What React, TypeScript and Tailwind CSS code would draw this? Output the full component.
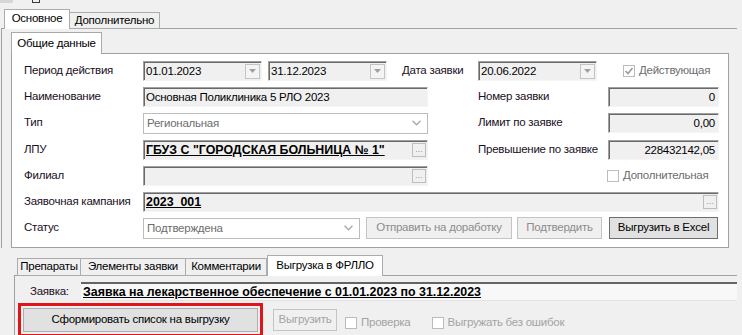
import React from "react";

type FieldProps = {
  w: string;
  children?: React.ReactNode;
  right?: boolean;
  bold?: boolean;
  dots?: boolean;
  dd?: boolean;
};

function Field({ w, children, right, bold, dots, dd }: FieldProps) {
  return (
    <div
      className={`${w} h-[20px] shrink-0 flex items-center bg-[#f0f0f0] border border-t-[#a0a0a0] border-l-[#a0a0a0] border-r-[#f4f4f4] border-b-[#f4f4f4] shadow-[inset_1px_1px_0_#696969] pl-[2px] pr-[2px] ${
        right ? "justify-end" : ""
      }`}
    >
      <span
        className={`flex-1 truncate leading-[16px] ${right ? "text-right pr-[1px]" : ""} ${
          bold ? "font-bold underline text-black text-[12.4px] tracking-normal" : "text-black"
        }`}
      >
        {children}
      </span>
      {dots && (
        <div className="w-[14px] h-[14px] shrink-0 border border-[#bdbdbd] bg-[#f0f0f0] flex items-end justify-center text-[9px] leading-[9px] text-[#9a9a9a] pb-[2px] mr-[-1px] tracking-normal">
          ...
        </div>
      )}
      {dd && (
        <div className="w-[15px] h-[15px] shrink-0 border border-[#c4c4c4] bg-[#f4f4f4] flex items-center justify-center mr-[-1px]">
          <svg width="7" height="4" viewBox="0 0 7 4">
            <path d="M0 0 L7 0 L3.5 4 Z" fill="#a0a0a0" />
          </svg>
        </div>
      )}
    </div>
  );
}

function Combo({ w, text }: { w: string; text: string }) {
  return (
    <div className={`${w} h-[21px] shrink-0 flex items-center bg-white border border-[#bcbcbc] pl-[3px] pr-[6px]`}>
      <span className="flex-1 text-[#6d6d6d] leading-[16px]">{text}</span>
      <svg width="9" height="6" viewBox="0 0 9 6">
        <path d="M0.5 0.8 L4.5 4.8 L8.5 0.8" stroke="#a8a8a8" strokeWidth="1.3" fill="none" />
      </svg>
    </div>
  );
}

function Btn({ w, children, disabled }: { w: string; children: React.ReactNode; disabled?: boolean }) {
  return (
    <div
      className={`${w} h-[22px] shrink-0 flex items-center justify-center border ${
        disabled ? "border-[#c4c4c4] bg-[#f0f0f0] text-[#8c8c8c]" : "border-[#6f6f6f] bg-[#e1e1e1] text-black"
      }`}
    >
      {children}
    </div>
  );
}

function Check({ checked, label, grey }: { checked?: boolean; label: string; grey?: string }) {
  return (
    <div className="flex items-center shrink-0">
      <div className="w-[12px] h-[12px] border border-[#bcbcbc] bg-white flex items-center justify-center">
        {checked && (
          <svg width="10" height="10" viewBox="0 0 10 10">
            <path d="M1.5 5 L4 7.5 L8.5 2" stroke="#9c9c9c" strokeWidth="1.6" fill="none" />
          </svg>
        )}
      </div>
      <span className={`ml-[4px] ${grey ?? "text-[#6d6d6d]"}`}>{label}</span>
    </div>
  );
}

function Label({ children, w = "w-[119px]" }: { children: React.ReactNode; w?: string }) {
  return <div className={`${w} shrink-0 text-[#1b0f24]`}>{children}</div>;
}

export default function App() {
  return (
    <div className="w-[742px] h-[335px] overflow-hidden bg-[#f0f0f0] font-['Liberation_Sans',Arial,sans-serif] text-[11.5px] tracking-[-0.25px] whitespace-nowrap text-black relative">
      {/* top strip */}
      <div className="h-[9px] flex items-start">
        <div className="w-[13px] h-[3px] bg-[#d6d6d6]" />
        <div className="ml-[19px] w-[8px] h-[3px] border-l border-r border-b border-[#3a3a3a]" />
      </div>

      {/* outer tabs */}
      <div className="h-[20px] flex items-start pl-[4px]">
        <div className="relative z-10 w-[66px] h-[20px] bg-white border border-b-0 border-[#acacac] flex items-center justify-center pb-[1px]">
          Основное
        </div>
        <div className="mt-[3px] w-[90px] h-[17px] border border-l-0 border-[#acacac] bg-[#f0f0f0] flex items-center justify-center">
          Дополнительно
        </div>
      </div>

      {/* outer panel */}
      <div className="-mt-px ml-[1px] w-[736px] border-t border-l border-[#a0a0a0] pt-[3px] pl-[9px]">
        <div className="h-[22px] flex items-start">
          <div className="relative z-10 w-[91px] h-[22px] bg-white border border-b-0 border-[#a9a9a9] flex items-center justify-center">
            Общие данные
          </div>
        </div>
        <div className="-mt-px w-[718px] h-[195px] bg-white border border-[#a0a0a0] pl-[12px] pt-[7px]">
          {/* row 1 */}
          <div className="flex items-center h-[20px]">
            <Label>Период действия</Label>
            <Field w="w-[119px]" dd>01.01.2023</Field>
            <div className="ml-[6px]">
              <Field w="w-[119px]" dd>31.12.2023</Field>
            </div>
            <div className="ml-[15px]">
              <Label w="w-[76px]">Дата заявки</Label>
            </div>
            <Field w="w-[119px]" dd>20.06.2022</Field>
            <div className="ml-[26px]">
              <Check checked label="Действующая" />
            </div>
          </div>
          {/* row 2 */}
          <div className="flex items-center h-[20px] mt-[6px]">
            <Label>Наименование</Label>
            <Field w="w-[285px]">Основная Поликлиника 5 РЛО 2023</Field>
            <div className="ml-[50px]">
              <Label w="w-[130px]">Номер заявки</Label>
            </div>
            <Field w="w-[111px]" right>0</Field>
          </div>
          {/* row 3 */}
          <div className="flex items-center h-[20px] mt-[6px]">
            <Label>Тип</Label>
            <Combo w="w-[285px]" text="Региональная" />
            <div className="ml-[50px]">
              <Label w="w-[130px]">Лимит по заявке</Label>
            </div>
            <Field w="w-[111px]" right>0,00</Field>
          </div>
          {/* row 4 */}
          <div className="flex items-center h-[20px] mt-[7px]">
            <Label>ЛПУ</Label>
            <Field w="w-[285px]" bold dots>ГБУЗ С "ГОРОДСКАЯ БОЛЬНИЦА № 1"</Field>
            <div className="ml-[50px]">
              <Label w="w-[130px]">Превышение по заявке</Label>
            </div>
            <Field w="w-[111px]" right>228432142,05</Field>
          </div>
          {/* row 5 */}
          <div className="flex items-center h-[20px] mt-[6px]">
            <Label>Филиал</Label>
            <Field w="w-[285px]" dots></Field>
            <div className="ml-[179px]">
              <Check label="Дополнительная" />
            </div>
          </div>
          {/* row 6 */}
          <div className="flex items-center h-[20px] mt-[6px]">
            <Label>Заявочная кампания</Label>
            <Field w="w-[576px]" bold dots>2023_001</Field>
          </div>
          {/* row 7 */}
          <div className="flex items-center h-[22px] mt-[5px]">
            <Label>Статус</Label>
            <Combo w="w-[217px]" text="Подтверждена" />
            <div className="ml-[6px]">
              <Btn w="w-[146px]" disabled>Отправить на доработку</Btn>
            </div>
            <div className="ml-[5px]">
              <Btn w="w-[85px]" disabled>Подтвердить</Btn>
            </div>
            <div className="ml-[7px]">
              <Btn w="w-[109px]">Выгрузить в Excel</Btn>
            </div>
          </div>
        </div>
      </div>

      {/* bottom tab control */}
      <div className="mt-[7px] ml-[14px] w-[723px]">
        <div className="h-[21px] flex items-start pl-[3px]">
          <div className="mt-[3px] w-[64px] h-[18px] border border-[#acacac] flex items-center justify-center">
            Препараты
          </div>
          <div className="mt-[3px] w-[105px] h-[18px] border border-l-0 border-[#acacac] flex items-center justify-center">
            Элементы заявки
          </div>
          <div className="mt-[3px] w-[81px] h-[18px] border border-l-0 border-[#acacac] flex items-center justify-center">
            Комментарии
          </div>
          <div className="relative z-10 w-[116px] h-[21px] bg-white border border-b-0 border-[#acacac] flex items-center justify-center">
            Выгрузка в ФРЛЛО
          </div>
        </div>
        <div className="-mt-px h-[70px] border-t border-l border-[#a0a0a0] pt-[6px]">
          <div className="flex items-center h-[19px]">
            <div className="w-[66px] shrink-0 pl-[15px] text-[#1b0f24]">Заявка:</div>
            <div className="flex-1 h-[19px] bg-[#f8f8f8] border-t-2 border-t-[#646464] border-b border-b-[#e4e4e4] flex items-center pl-[2px]">
              <span className="font-bold underline leading-[15px] text-[12.4px] tracking-normal">
                Заявка на лекарственное обеспечение с 01.01.2023 по 31.12.2023
              </span>
            </div>
          </div>
          <div className="flex items-start mt-[2px] ml-[3px]">
            <div className="border-[3px] border-[#e0141b] p-[2px]">
              <div className="w-[235px] h-[24px] border border-[#adadad] bg-[#e1e1e1] flex items-center justify-center">
                Сформировать список на выгрузку
              </div>
            </div>
            <div className="ml-[10px] mt-[6px]">
              <Btn w="w-[64px]" disabled>
                <span className="text-[#a3a3a3]">Выгрузить</span>
              </Btn>
            </div>
            <div className="ml-[8px] mt-[11px]">
              <Check label="Проверка" grey="text-[#a3a3a3]" />
            </div>
            <div className="ml-[21px] mt-[11px]">
              <Check label="Выгружать без ошибок" grey="text-[#a3a3a3]" />
            </div>
          </div>
        </div>
      </div>
    </div>
  );
}
